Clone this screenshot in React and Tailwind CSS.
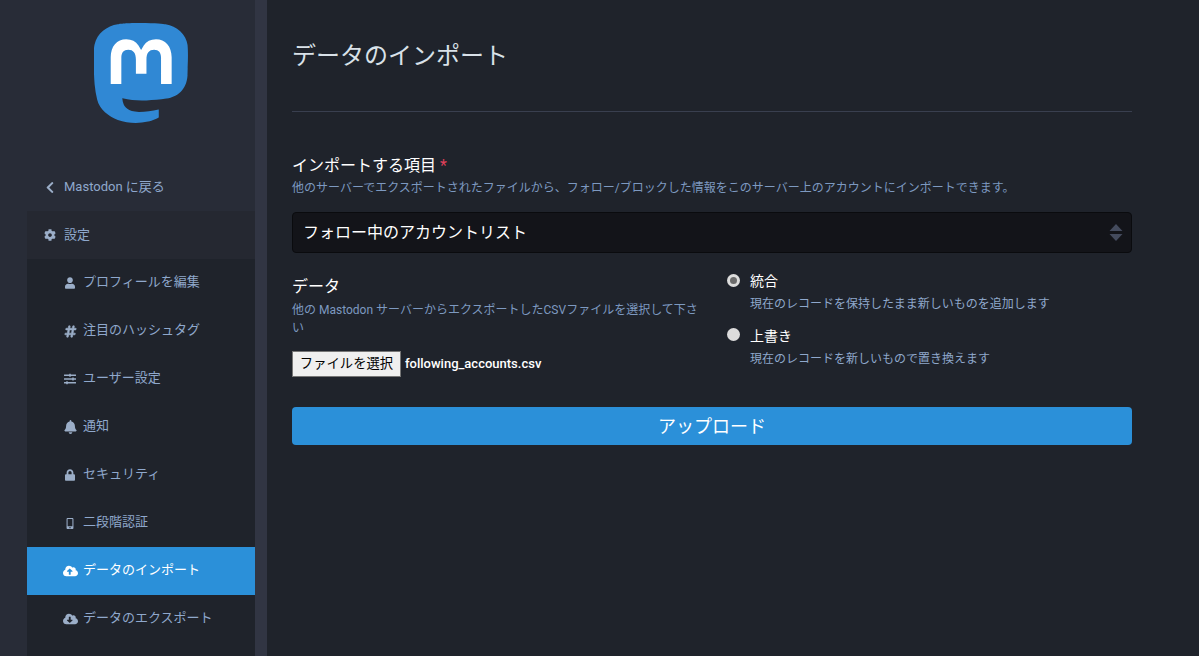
import React from "react";
import { FaChevronLeft, FaCog, FaUser, FaHashtag, FaSlidersH, FaBell, FaLock, FaMobileAlt, FaCloudUploadAlt, FaCloudDownloadAlt } from "react-icons/fa";

const font = "font-['Roboto','Noto_Sans_CJK_JP',sans-serif]";

const items = [
  { icon: FaUser, label: "プロフィールを編集", size: "h-[12px] w-[10px]" },
  { icon: FaHashtag, label: "注目のハッシュタグ", size: "h-[13px] w-[13px] stroke-current stroke-[24]" },
  { icon: FaSlidersH, label: "ユーザー設定", size: "h-[12px] w-[12px]" },
  { icon: FaBell, label: "通知", size: "h-[14px] w-[13px]" },
  { icon: FaLock, label: "セキュリティ", size: "h-[12px] w-[10px]" },
  { icon: FaMobileAlt, label: "二段階認証", size: "h-[11px] w-[8px]" },
  { icon: FaCloudUploadAlt, label: "データのインポート", active: true, size: "h-[14px] w-[15px] shrink-0" },
  { icon: FaCloudDownloadAlt, label: "データのエクスポート", size: "h-[14px] w-[15px] shrink-0" },
];

function Logo() {
  return (
    <svg viewBox="0 0 61 65" className="h-[100px] w-[94px]" preserveAspectRatio="none">
      <path fill="#3088d4" d="M60.754 14.39C59.814 7.406 53.69 1.903 46.433.836 45.209.656 40.57 0 29.825 0h-.08C18.997 0 16.692.656 15.468.836 8.412 1.873 1.968 6.81.405 13.874c-.752 3.479-.832 7.336-.692 10.873.199 5.073.238 10.138.7 15.19.32 3.356.876 6.685 1.67 9.96 1.485 6.04 7.5 11.067 13.392 13.115 6.31 2.139 13.093 2.495 19.593 1.027.715-.165 1.422-.356 2.122-.574 1.577-.497 3.427-1.054 4.787-2.034.018-.014.033-.03.044-.05.01-.02.016-.04.017-.064v-4.875c0-.022-.006-.043-.015-.063-.01-.02-.024-.036-.042-.05-.017-.014-.038-.023-.06-.028-.02-.005-.043-.005-.064 0-4.164.988-8.43 1.483-12.71 1.476-7.366 0-9.347-3.466-9.914-4.91-.456-1.247-.745-2.547-.86-3.868-.002-.023.002-.045.01-.065.01-.02.023-.04.04-.053.018-.014.04-.024.06-.03.023-.004.046-.004.067.002 4.094.977 8.29 1.47 12.5 1.47 1.013 0 2.022 0 3.035-.027 4.234-.118 8.697-.334 12.863-1.142.104-.02.208-.038.297-.065 6.57-1.255 12.823-5.192 13.458-15.165.024-.392.083-4.11.083-4.518.003-1.385.448-9.83-.065-15.017z" />
      <path fill="#fff" d="M50.394 22.237v17.397h-6.895V22.75c0-3.555-1.48-5.366-4.49-5.366-3.308 0-4.966 2.14-4.966 6.37v9.226h-6.854v-9.227c0-4.23-1.658-6.37-4.966-6.37-2.99 0-4.485 1.81-4.485 5.366v16.884H10.85V22.237c0-3.554.905-6.377 2.714-8.47 1.872-2.09 4.32-3.163 7.36-3.163 3.514 0 6.18 1.35 7.94 4.05l1.71 2.868 1.71-2.868c1.76-2.7 4.427-4.05 7.94-4.05 3.04 0 5.488 1.073 7.36 3.163 1.81 2.093 2.715 4.916 2.81 8.47z" />
    </svg>
  );
}

function Radio({ checked, className }) {
  return (
    <span className={`flex h-[13px] w-[13px] shrink-0 items-center justify-center rounded-full bg-[#dcdcdc] ${className}`}>
      {checked && <span className="h-[7px] w-[7px] rounded-full bg-[#6b6b6b]" />}
    </span>
  );
}

export default function App() {
  return (
    <div className={`flex h-[656px] w-[1199px] overflow-hidden bg-[#1f232b] ${font}`}>
      <aside className="flex w-[255px] shrink-0 flex-col bg-[#282c37]">
        <div className="flex h-[163px] justify-center pt-[23px] pl-[27px]">
          <div><Logo /></div>
        </div>
        <div className="flex h-12 items-center pl-[45px] text-[13px] text-[#9baec8]">
          <FaChevronLeft className="mr-[9px] h-[13px] w-[10px]" />
          <span className="text-[#8fa8cc]">Mastodon に戻る</span>
        </div>
        <div className="ml-[27px] flex-1 bg-[#1f232b]">
          <div className="flex h-12 items-center bg-[#252831] pl-[17px] text-[13px] text-[#9baec8]">
            <FaCog className="mr-[8px] h-[12px] w-[12px]" />
            <span className="text-[#8fa8cc]">設定</span>
          </div>
          <nav>
            {items.map(({ icon: Icon, label, active, size }) => (
              <div key={label} className={`flex h-12 items-center pl-[36px] text-[13px] ${active ? "bg-[#2b90d9] text-white" : "text-[#9baec8]"}`}>
                <span className="mr-[6px] flex w-[14px] justify-center">
                  <Icon className={size} />
                </span>
                <span className={`-mt-[2px] ${active ? "text-white" : "text-[#8fa8cc]"}`}>{label}</span>
              </div>
            ))}
          </nav>
        </div>
      </aside>
      <div className="w-3 shrink-0 bg-[#313543]" />
      <main className="ml-[25px] w-[840px]">
        <h1 className="mt-[40px] h-[32px] text-[24px] leading-[32px] font-normal text-[#d9e1e8]">データのインポート</h1>
        <div className="mt-[39px] h-px bg-[#393f4f]" />
        <div className="mt-[43px] text-[16px] leading-[22px] text-white">
          インポートする項目 <span className="text-[#df405a]">*</span>
        </div>
        <p className="mt-[1px] text-[12px] leading-[20px] text-[#7d99c0]">他のサーバーでエクスポートされたファイルから、フォロー/ブロックした情報をこのサーバー上のアカウントにインポートできます。</p>
        <div className="mt-[14px] flex h-[41px] items-center justify-between rounded border border-[#0a0b0e] bg-[#131419] pl-[10px] pr-[8px] text-[16px] text-white">
          <span>フォロー中のアカウントリスト</span>
          <svg width="14" height="17" viewBox="0 0 14 17" className="text-[#444b5d]">
            <path fill="currentColor" d="M7 0l6.500 7H.5zM7 17L.5 10h13z" />
          </svg>
        </div>
        <div className="mt-[20px] flex gap-[27px]">
          <div className="w-[408px]">
            <div className="mt-[3px] text-[16px] leading-[22px] text-white">データ</div>
            <p className="mt-[3px] text-[12px] leading-[18px] text-[#7d99c0]">他の Mastodon サーバーからエクスポートしたCSVファイルを選択して下さい</p>
            <div className="mt-[14px] flex items-center">
              <button className="h-[26px] w-[109px] border border-[#767676] bg-[#efefef] text-[13.33px] text-black">ファイルを選択</button>
              <span className="ml-[4px] text-[13px] font-medium text-white">following_accounts.csv</span>
            </div>
          </div>
          <div className="flex flex-col">
            <div className="flex gap-[10px]">
              <Radio checked className="mt-[1px]" />
              <div className="-mt-[1px]">
                <div className="text-[14px] leading-[18px] text-white">統合</div>
                <div className="mt-[4px] text-[12px] leading-[20px] text-[#8fa8cc]">現在のレコードを保持したまま新しいものを追加します</div>
              </div>
            </div>
            <div className="mt-[13px] flex gap-[10px]">
              <Radio className="mt-[1px]" />
              <div>
                <div className="text-[14px] leading-[18px] text-white">上書き</div>
                <div className="mt-[4px] text-[12px] leading-[20px] text-[#8fa8cc]">現在のレコードを新しいもので置き換えます</div>
              </div>
            </div>
          </div>
        </div>
        <button className="mt-[30px] block h-[38px] w-full rounded bg-[#2b90d9] text-[18px] text-white">アップロード</button>
      </main>
    </div>
  );
}
